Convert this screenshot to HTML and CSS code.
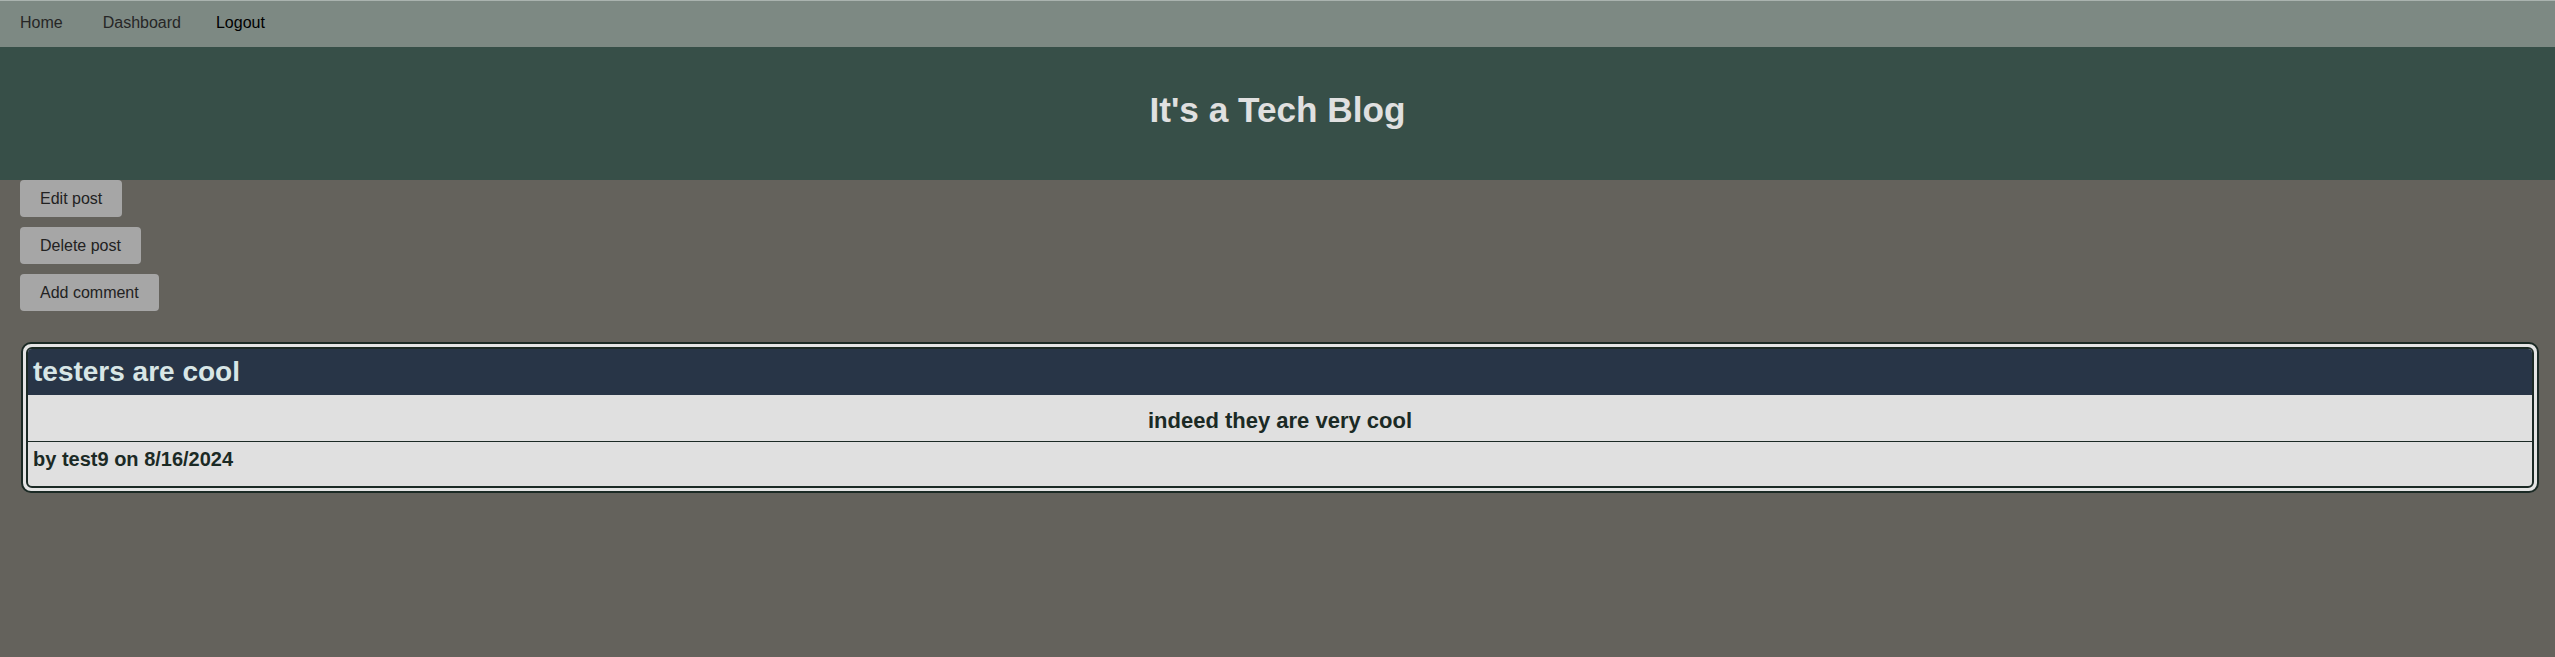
FILE: index.html
```html
<!DOCTYPE html>
<html lang="en">
<head>
<meta charset="utf-8">
<title>It's a Tech Blog</title>
<link rel="stylesheet" href="styles.css">
</head>
<body>
<nav class="nav">
  <a class="nav-link" href="#">Home</a>
  <a class="nav-link" href="#">Dashboard</a>
  <a class="nav-link nav-logout" href="#">Logout</a>
</nav>
<header class="header">
  <h1 class="header-title">It's a Tech Blog</h1>
</header>
<main class="main">
  <div class="actions">
    <button class="btn">Edit post</button>
    <button class="btn">Delete post</button>
    <button class="btn">Add comment</button>
  </div>
  <article class="card">
    <div class="card-inner">
      <h2 class="card-title">testers are cool</h2>
      <p class="card-body">indeed they are very cool</p>
      <p class="card-footer">by test9 on 8/16/2024</p>
    </div>
  </article>
</main>
</body>
</html>
```

FILE: styles.css
```css
* { box-sizing: border-box; }
html, body {
  margin: 0;
  padding: 0;
  background: #64625c;
  font-family: "Liberation Sans", Arial, sans-serif;
  min-height: 657px;
}
.nav {
  display: flex;
  background: #7d8983;
  border-top: 1px solid #aab3af;
  padding: 13px 0 15px 20px;
  line-height: 18px;
}
.nav-link {
  font-size: 16px;
  color: #262626;
  text-decoration: none;
}
.nav-link + .nav-link { margin-left: 40px; }
.nav-link.nav-logout { margin-left: 35px; color: #000; }
.header {
  background: #374f48;
  padding: 43px 0 50px;
  text-align: center;
}
.header-title {
  margin: 0;
  font-size: 35.2px;
  line-height: 40px;
  font-weight: bold;
  color: #e0e0e0;
}
.main {
  padding: 0 16px 0 20px;
}
.actions {
  display: flex;
  flex-direction: column;
  align-items: flex-start;
  gap: 10px;
}
.btn {
  font-family: "Liberation Sans", Arial, sans-serif;
  font-size: 16px;
  line-height: 19px;
  padding: 9px 20px;
  background: #a6a6a6;
  color: #222;
  border: 0;
  border-radius: 4px;
}
.card {
  margin: 31px 0 0 1px;
  border: 2px solid #1b2a25;
  border-radius: 10px;
  padding: 3px;
  background: #e4e4e4;
}
.card-inner {
  border: 2px solid #1b2a25;
  border-radius: 6px;
  overflow: hidden;
  background: #e0e0e0;
}
.card-title {
  margin: 0;
  background: #283547;
  color: #d8e6e6;
  font-size: 28px;
  line-height: 32px;
  font-weight: bold;
  padding: 7px 5px;
}
.card-body {
  margin: 0;
  text-align: center;
  font-size: 22px;
  line-height: 25px;
  font-weight: bold;
  color: #1b2a25;
  padding: 13px 5px 8px;
  border-bottom: 1px solid #1b2a25;
}
.card-footer {
  margin: 0;
  font-size: 20px;
  line-height: 23px;
  font-weight: bold;
  color: #1b2a25;
  padding: 6px 5px 15px;
}
```
